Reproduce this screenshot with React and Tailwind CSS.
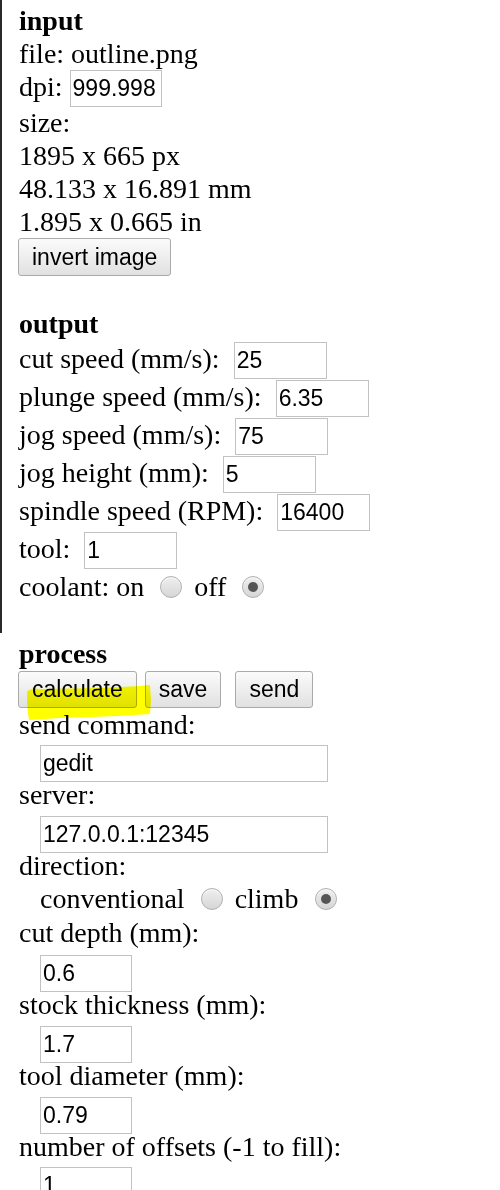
import React from "react";

const T = ({ children, className = "" }) => (
  <div className={`h-[33px] leading-[33px] whitespace-pre ${className}`}>{children}</div>
);

const Field = ({ value, w = "w-[93px]", className = "" }) => (
  <input
    readOnly
    value={value}
    className={`${w} h-[37px] border border-[#c2c2c2] bg-white px-[2px] py-0 font-['Liberation_Sans',Arial,sans-serif] text-[23px] text-black outline-none ${className}`}
  />
);

const Btn = ({ children, className = "" }) => (
  <button className={`h-[37px] px-[13px] border border-[#aaaaaa] rounded-[3px] bg-linear-to-b from-[#fbfbfb] to-[#e1e1e1] font-['Liberation_Sans',Arial,sans-serif] text-[23px] leading-[35px] text-black ${className}`}>
    {children}
  </button>
);

const Radio = ({ checked, className = "ml-[9px] mr-[5px]" }) => (
  <span className={`relative ${className} inline-block w-[22px] h-[22px] translate-y-[2px] rounded-full border border-[#b0b0b0] bg-linear-to-b from-[#efefef] to-[#d6d6d6] shadow-[inset_0_1px_1px_rgba(255,255,255,0.8)]`}>
    {checked && <span className="absolute left-[5px] top-[5px] w-[10px] h-[10px] rounded-full bg-[#555555]" />}
  </span>
);

const Row = ({ label, value, h = "h-[38px]", w }) => (
  <div className={`flex items-baseline ${h}`}>
    <span className="whitespace-pre leading-[33px]">{label}</span>
    <Field value={value} w={w} />
  </div>
);

export default function App() {
  return (
    <div className="relative w-[500px] h-[1190px] overflow-hidden bg-white text-black font-['Liberation_Serif','Times_New_Roman',serif] text-[28px]">
      <div className="border-l-2 border-[#2a2a2a] pl-[17px] pt-[4px] pb-[30px]">
        <T className="font-bold">input</T>
        <T>file: outline.png</T>
        <Row label={"dpi: "} value="999.998" h="h-[36px]" w="w-[92px]" />
        <T>size:</T>
        <T>1895 x 665 px</T>
        <T>48.133 x 16.891 mm</T>
        <T>1.895 x 0.665 in</T>
        <div className="h-[38px] flex">
          <Btn className="-ml-[1px] h-[38px]">invert image</Btn>
        </div>
        <T className="font-bold mt-[31px]">output</T>
        <div className="mt-[2px]">
          <Row label={"cut speed (mm/s):\u00a0\u00a0"} value="25" />
          <Row label={"plunge speed (mm/s):\u00a0\u00a0"} value="6.35" />
          <Row label={"jog speed (mm/s):\u00a0\u00a0"} value="75" />
          <Row label={"jog height (mm):\u00a0\u00a0"} value="5" />
          <Row label={"spindle speed (RPM):\u00a0\u00a0"} value="16400" />
          <Row label={"tool:\u00a0\u00a0"} value="1" />
        </div>
        <div className="flex items-baseline h-[33px] leading-[33px] whitespace-pre">
          <span>coolant: on </span>
          <Radio />
          <span> off </span>
          <Radio checked />
        </div>
      </div>

      <div className="pl-[19px] pt-[4px]">
        <T className="font-bold">process</T>
        <div className="mt-[1px] flex h-[37px] -ml-[1px]">
          <Btn>calculate</Btn>
          <Btn className="ml-[8px]">save</Btn>
          <Btn className="ml-[14px]">send</Btn>
        </div>
        <T>send command:</T>
        <div className="h-[37px] pl-[21px]">
          <Field value="gedit" w="w-[288px]" />
        </div>
        <T>server:</T>
        <div className="mt-[1px] h-[37px] pl-[21px]">
          <Field value="127.0.0.1:12345" w="w-[288px]" />
        </div>
        <T>direction:</T>
        <div className="flex items-baseline h-[34px] leading-[33px] whitespace-pre pl-[21px]">
          <span>conventional </span>
          <Radio />
          <span> climb </span>
          <Radio checked className="ml-[10px] mr-[5px]" />
        </div>
        <T>cut depth (mm):</T>
        <div className="mt-[2px] h-[37px] pl-[21px]">
          <Field value="0.6" w="w-[92px]" />
        </div>
        <T>stock thickness (mm):</T>
        <div className="mt-[1px] h-[37px] pl-[21px]">
          <Field value="1.7" w="w-[92px]" />
        </div>
        <T>tool diameter (mm):</T>
        <div className="mt-[1px] h-[37px] pl-[21px]">
          <Field value="0.79" w="w-[92px]" />
        </div>
        <T>number of offsets (-1 to fill):</T>
        <div className="h-[37px] pl-[21px]">
          <Field value="1" w="w-[92px]" />
        </div>
      </div>

      <svg
        className="pointer-events-none absolute left-0 top-0 mix-blend-multiply"
        width="500"
        height="1190"
        viewBox="0 0 500 1190"
      >
        <path
          d="M27 692 Q 30 687 40 689 L 100 688 L 140 686 L 150 685 L 151 700 L 150 714 L 120 716 L 60 718 L 29 720 Q 27 710 27 692 Z"
          fill="#ffff00"
        />
      </svg>
    </div>
  );
}
